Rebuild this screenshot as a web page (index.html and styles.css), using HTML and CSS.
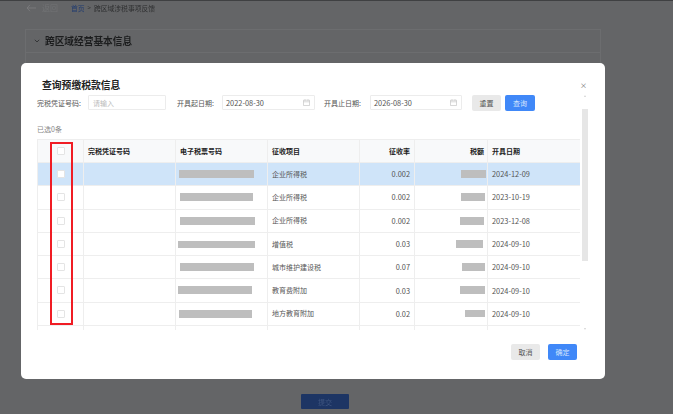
FILE: index.html
```html
<!DOCTYPE html>
<html lang="zh-CN">
<head>
    <meta charset="UTF-8">
    <title>跨区域涉税事项反馈</title>
    <link rel="stylesheet" href="styles.css">
</head>
<body>
    <div class="page">
        <div class="crumbs">
            <svg class="back-arrow" width="10" height="8" viewBox="0 0 10 8"><path d="M4 .8 1 4l3 3.2M1 4h9" fill="none" stroke="#7d7e80" stroke-width=".8"/></svg>
            <span class="back-text">返回</span>
            <span class="crumb-home">首页</span>
            <span class="crumb-sep">&gt;</span>
            <span class="crumb-now">跨区域涉税事项反馈</span>
        </div>
        <div class="panel">
            <div class="panel-head">
                <svg width="6" height="4" viewBox="0 0 6 4"><path d="M.8.8 3 3l2.2-2.2" fill="none" stroke="#2a2b2c" stroke-width=".8"/></svg>
                <span>跨区域经营基本信息</span>
            </div>
        </div>
        <div class="submit-row"><button class="submit">提交</button></div>
    </div>

    <div class="modal">
        <span class="close">×</span>
        <h2 class="modal-title">查询预缴税款信息</h2>
        <div class="filters">
            <label class="label label-first">完税凭证号码:</label>
            <div class="input input-num"><span class="placeholder">请输入</span></div>
            <label class="label label-start">开具起日期:</label>
            <div class="input input-date">
                <span>2022-08-30</span>
                <svg width="7" height="7" viewBox="0 0 7 7"><path d="M.5 1.2h6v5.3h-6zM.5 2.8h6M2 .3v1.4M5 .3v1.4" fill="none" stroke="#bdbdbd" stroke-width=".6"/></svg>
            </div>
            <label class="label label-end">开具止日期:</label>
            <div class="input input-date input-date-end">
                <span>2026-08-30</span>
                <svg width="7" height="7" viewBox="0 0 7 7"><path d="M.5 1.2h6v5.3h-6zM.5 2.8h6M2 .3v1.4M5 .3v1.4" fill="none" stroke="#bdbdbd" stroke-width=".6"/></svg>
            </div>
            <button class="btn btn-grey btn-reset">重置</button>
            <button class="btn btn-blue btn-query">查询</button>
        </div>
        <div class="selected">已选0条</div>
        <div class="table-area">
            <div class="table-clip">
                <table class="tax-table">
                    <colgroup>
                        <col class="c-check"><col class="c-num"><col class="c-ticket"><col class="c-item"><col class="c-rate"><col class="c-amount"><col class="c-date">
                    </colgroup>
                    <thead>
                        <tr>
                            <th class="center"><span class="check"></span></th>
                            <th>完税凭证号码</th>
                            <th>电子税票号码</th>
                            <th>征收项目</th>
                            <th class="right">征收率</th>
                            <th class="right amount">税额</th>
                            <th>开具日期</th>
                        </tr>
                    </thead>
                    <tbody>
                        <tr class="active">
                            <td class="center"><span class="check"></span></td><td></td>
                            <td><span class="mask" style="width:75px;margin-left:-1px"></span></td>
                            <td>企业所得税</td><td class="right num">0.002</td>
                            <td class="right amount"><span class="mask" style="width:25px;margin-right:-2px"></span></td><td class="num">2024-12-09</td>
                        </tr>
                        <tr>
                            <td class="center"><span class="check"></span></td><td></td>
                            <td><span class="mask" style="width:73px"></span></td>
                            <td>企业所得税</td><td class="right num">0.002</td>
                            <td class="right amount"><span class="mask" style="width:24px;margin-right:-1px"></span></td><td class="num">2023-10-19</td>
                        </tr>
                        <tr>
                            <td class="center"><span class="check"></span></td><td></td>
                            <td><span class="mask" style="width:75px"></span></td>
                            <td>企业所得税</td><td class="right num">0.002</td>
                            <td class="right amount"><span class="mask" style="width:24px"></span></td><td class="num">2023-12-08</td>
                        </tr>
                        <tr>
                            <td class="center"><span class="check"></span></td><td></td>
                            <td><span class="mask mask-thin" style="width:77px;margin-left:-2px"></span></td>
                            <td>增值税</td><td class="right num">0.03</td>
                            <td class="right amount"><span class="mask" style="width:27px;margin-right:1px"></span></td><td class="num">2024-09-10</td>
                        </tr>
                        <tr>
                            <td class="center"><span class="check"></span></td><td></td>
                            <td><span class="mask" style="width:74px"></span></td>
                            <td>城市维护建设税</td><td class="right num">0.07</td>
                            <td class="right amount"><span class="mask" style="width:23px;margin-right:-1px"></span></td><td class="num">2024-09-10</td>
                        </tr>
                        <tr>
                            <td class="center"><span class="check"></span></td><td></td>
                            <td><span class="mask" style="width:74px;margin-left:-2px"></span></td>
                            <td>教育费附加</td><td class="right num">0.03</td>
                            <td class="right amount"><span class="mask" style="width:25px;margin-right:-1px"></span></td><td class="num">2024-09-10</td>
                        </tr>
                        <tr>
                            <td class="center"><span class="check"></span></td><td></td>
                            <td><span class="mask" style="width:73px;margin-left:-1px"></span></td>
                            <td>地方教育附加</td><td class="right num">0.02</td>
                            <td class="right amount"><span class="mask mask-thin" style="width:20px;margin-right:-1px"></span></td><td class="num">2024-09-10</td>
                        </tr>
                        <tr><td></td><td></td><td></td><td></td><td></td><td></td><td></td></tr>
                    </tbody>
                </table>
            </div>
            <div class="scrollbar">
                <span class="arrow-up"></span>
                <div class="thumb"></div>
                <span class="arrow-down"></span>
            </div>
        </div>
        <div class="modal-foot">
            <button class="btn btn-grey">取消</button>
            <button class="btn btn-blue">确定</button>
        </div>
        <div class="mark"></div>
    </div>
</body>
</html>
```

FILE: styles.css
```css
html, body {
    margin: 0;
    padding: 0;
    height: 100%;
}

body {
    background: #646567;
    overflow: hidden;
    font-family: "Noto Sans CJK SC", "Noto Sans", sans-serif;
    color: #555;
    filter: blur(0.5px);
}

button {
    font-family: inherit;
    border: 0;
    padding: 0;
}

/* page behind the dialog */
.page {
    border-top: 1px solid #3f4042;
    height: 413px;
    box-sizing: border-box;
    display: flex;
    flex-direction: column;
}

.crumbs {
    height: 13px;
    display: flex;
    align-items: center;
    padding-left: 26px;
    font-size: 6.8px;
    color: #2e2f30;
}

.back-text {
    margin-left: 6px;
    font-size: 8px;
    color: #727375;
}

.crumb-home {
    margin-left: 13px;
    color: #1f3a70;
}

.crumb-sep {
    margin: 0 3px;
    font-size: 6px;
}

.panel {
    margin: 15px 72px 0 25px;
    border: 1px solid #6c6d6f;
    height: 334px;
    flex: none;
}

.panel-head {
    height: 23px;
    box-sizing: border-box;
    border-bottom: 1px solid #6c6d6f;
    display: flex;
    align-items: center;
    gap: 5px;
    padding: 0 0 0 8px;
    font-size: 9.7px;
    font-weight: 700;
    color: #1c1d1e;
}

.submit-row {
    display: flex;
    justify-content: center;
    padding-right: 23px;
    margin-top: 29px;
}

.submit {
    width: 48px;
    height: 15px;
    background: #1d3564;
    color: #3f5680;
    font-size: 7px;
    border-radius: 1px;
}

/* dialog */
.modal {
    position: absolute;
    left: 21px;
    top: 63px;
    width: 584px;
    height: 316px;
    background: #fff;
    border-radius: 5px;
    box-sizing: border-box;
    padding: 0 17px 0 16px;
    display: flex;
    flex-direction: column;
}

.close {
    position: absolute;
    right: 18px;
    top: 16px;
    font-size: 7px;
    line-height: 12px;
    color: #666;
}

.modal-title {
    margin: 14px 0 0 5px;
    font-size: 9.8px;
    line-height: 16px;
    font-weight: 700;
    color: #222;
}

.filters {
    display: flex;
    align-items: center;
    height: 15px;
    margin-top: 2px;
    font-size: 7.4px;
}

.label {
    color: #555;
    font-size: 7px;
    white-space: nowrap;
}

.label-first {
    width: 51px;
}

.label-start {
    width: 45px;
    margin-left: 11px;
}

.label-end {
    width: 46px;
    margin-left: 9px;
}

.input {
    height: 15px;
    box-sizing: border-box;
    border: 1px solid #ececec;
    border-radius: 1px;
    display: flex;
    align-items: center;
    justify-content: space-between;
    padding: 0 4px 0 3px;
    color: #555;
}

.input-num {
    width: 78px;
    padding-left: 4px;
    font-size: 7px;
}

.input-date {
    width: 93px;
}

.input-date-end {
    width: 92px;
}

.placeholder {
    color: #bbb;
}

.btn {
    width: 29px;
    height: 16px;
    font-size: 7px;
    border-radius: 2px;
}

.btn-grey {
    background: #e9e9e9;
    color: #555;
}

.btn-blue {
    background: #4088f8;
    color: #d5e5fd;
}

.btn-reset {
    margin-left: 10px;
}

.btn-query {
    width: 30px;
    margin-left: 4px;
}

.selected {
    margin-top: 13px;
    font-size: 7px;
    line-height: 12px;
    color: #888;
}

.table-area {
    margin-top: 4px;
    display: flex;
    height: 191px;
}

.table-clip {
    width: 543px;
    height: 191px;
    overflow: hidden;
    flex: none;
}

.tax-table {
    table-layout: fixed;
    border-collapse: collapse;
    width: 543px;
    font-size: 7px;
}

.c-check { width: 46px; }
.c-num { width: 92px; }
.c-ticket { width: 92px; }
.c-item { width: 92px; }
.c-rate { width: 55px; }
.c-amount { width: 73px; }
.c-date { width: 93px; }

.tax-table th,
.tax-table td {
    border: 1px solid #eeeeee;
    height: 23.3px;
    padding: 0 4px 1px;
    box-sizing: border-box;
    text-align: left;
    color: #555;
    overflow: hidden;
    white-space: nowrap;
}

.tax-table th {
    height: 23px;
    background: #f8f9fa;
    color: #222;
    font-weight: 700;
}

.tax-table .right {
    text-align: right;
}

.tax-table .center {
    text-align: center;
}

.tax-table .amount {
    padding-right: 3px;
}

.tax-table .num {
    font-size: 7.4px;
}

.tax-table .active td {
    background: #cfe4f9;
}

.check {
    display: inline-block;
    width: 8px;
    height: 8px;
    margin-bottom: 1px;
    box-sizing: border-box;
    border: 1px solid #e4e4e4;
    border-radius: 1px;
    background: #fff;
    vertical-align: middle;
}

.mask {
    display: inline-block;
    height: 8px;
    margin-bottom: 1px;
    background: #bebebe;
    vertical-align: middle;
}

.mask-thin {
    height: 7px;
}

.scrollbar {
    width: 6px;
    margin-left: 2px;
    margin-top: -44px;
    height: 235px;
    position: relative;
    flex: none;
}

.thumb {
    position: absolute;
    top: 14px;
    left: 0;
    width: 6px;
    height: 152px;
    background: #e6e6e6;
}

.arrow-up,
.arrow-down {
    position: absolute;
    left: 1.5px;
    width: 0;
    height: 0;
    border-left: 1.5px solid transparent;
    border-right: 1.5px solid transparent;
}

.arrow-up {
    top: 0;
    border-bottom: 2px solid #d2d2d2;
}

.arrow-down {
    bottom: 0;
    border-top: 2px solid #d2d2d2;
}

.modal-foot {
    display: flex;
    justify-content: flex-end;
    gap: 8px;
    margin-top: 14px;
    padding-right: 11px;
}

/* red annotation drawn over the first column */
.mark {
    position: absolute;
    left: 29px;
    top: 79px;
    width: 23px;
    height: 183px;
    box-sizing: border-box;
    border: 2px solid #f01c24;
}
```
